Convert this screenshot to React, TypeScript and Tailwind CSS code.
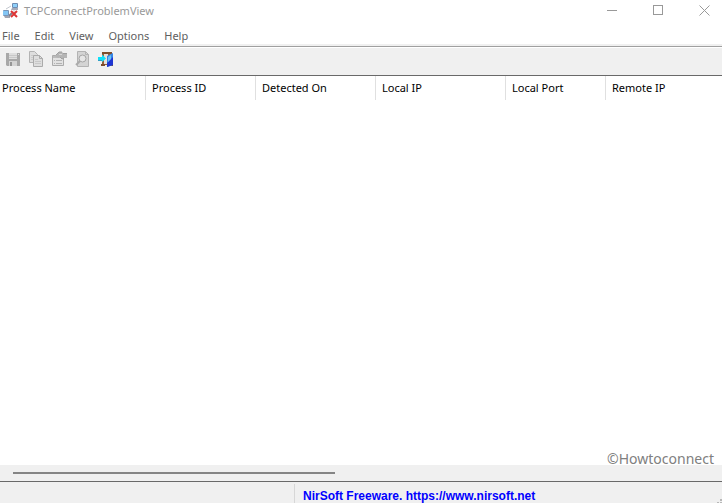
import React from 'react'

type IconProps = {
    children: React.ReactNode;
}

type ToolButton = {
    label: string;
    icon: React.ReactNode;
    disabled: boolean;
}

const menus = ['File', 'Edit', 'View', 'Options', 'Help'];

const columns = [
    { name: 'Process Name', width: 'w-[146px] pl-0.5' },
    { name: 'Process ID', width: 'w-[110px] pl-1.5' },
    { name: 'Detected On', width: 'w-[120px] pl-1.5' },
    { name: 'Local IP', width: 'w-[130px] pl-1.5' },
    { name: 'Local Port', width: 'w-[100px] pl-1.5' },
    { name: 'Remote IP', width: 'w-[130px] pl-1.5' },
];

const Icon: React.FC<IconProps> = ({ children }) => (
    <svg width="16" height="16" viewBox="0 0 16 16" fill="none" aria-hidden="true" className="shrink-0">
        {children}
    </svg>
)

const AppIcon = () => (
    <Icon>
        <path d="M3 6l5-3M11 6v4" stroke="#c3c7ce" />
        <rect x="9" y="0" width="6" height="5" rx="1" fill="#6f8cb2" />
        <rect x="10" y="1" width="4" height="3" fill="#8ed0fa" />
        <path d="M9 5h6v2H8z" fill="#a7abb8" />
        <rect x="0" y="7" width="6" height="6" rx="1" fill="#7794b8" />
        <rect x="0" y="8" width="5" height="4" fill="#83c6f5" />
        <path d="M1 13h6v2H2z" fill="#a2a5b0" />
        <path d="M6 13l3-3" stroke="#7d7d8c" strokeWidth="2" />
        <path d="M8 8l6 6M14 8l-6 6" stroke="#dc3434" strokeWidth="2" />
    </Icon>
)

const SaveIcon = () => (
    <Icon>
        <path d="M1 2h14v13H2l-1-1z" fill="#a8a8a8" />
        <path d="M4 2h8v6H4z" fill="#dedede" />
        <path d="M4 4.500h8M4 6.500h8" stroke="#c8c8c8" />
        <path d="M4 10h8v5H4z" fill="#d4d4d4" />
        <path d="M5 11h2v4H5z" fill="#969696" />
        <path d="M13 3h1v1h-1z" fill="#e4e4e4" />
    </Icon>
)

const CopyIcon = () => (
    <Icon>
        <path d="M1.500.5h5l3 3v8h-8z" fill="#dedede" stroke="#b3b3b3" />
        <path d="M3 4.500h4M3 6.500h4M3 8.500h3" stroke="#cbcbcb" />
        <path d="M5.500 4.500h6l3 3v8h-9z" fill="#dedede" stroke="#ababab" />
        <path d="M11.500 4.500v3h3" stroke="#ababab" />
        <path d="M7 8.500h3M7 10.500h6M7 12.500h6" stroke="#c8c8c8" />
    </Icon>
)

const PropertiesIcon = () => (
    <Icon>
        <path d="M1.500 4.500h11v10h-11z" fill="#e2e2e2" stroke="#ababab" />
        <path d="M2 5h10v2H2z" fill="#bcbcbc" />
        <path d="M3 9.500h1M5 9.500h6M3 12.500h1M5 12.500h6" stroke="#b3b3b3" />
        <path d="M4 5l4-4h3l1 1h4v5h-3l-2 1-2-2-2 1z" fill="#b5b5b5" />
        <path d="M5 4l3-3h3M12 2.500h4M9 6l2 2 2-1" stroke="#a0a0a0" />
        <path d="M8 3h3v1H8z" fill="#d6d6d6" />
    </Icon>
)

const FindIcon = () => (
    <Icon>
        <path d="M3.500.5h8l3 3v12h-11z" fill="#d4d4d4" stroke="#b3b3b3" />
        <path d="M11.500.5v3h3" stroke="#b3b3b3" />
        <path d="M6 10l-4 4" stroke="#ababab" strokeWidth="2" />
        <circle cx="8.500" cy="7.500" r="3.500" fill="#e6e6e6" stroke="#a5a5a5" />
    </Icon>
)

const ExitIcon = () => (
    <Icon>
        <path d="M5 1h10v2H5z" fill="#7d4d2c" />
        <path d="M5 3h10v11H5z" fill="#94603b" />
        <path d="M7 3h4v10H7z" fill="#e6e0da" />
        <path d="M4 13h4v2H4zM13 13h3v2h-3z" fill="#7b4b2c" />
        <path d="M10 5l6-3v12l-6 2z" fill="#3486e6" />
        <path d="M10 12l6-6v8l-6 2z" fill="#1f35d2" />
        <path d="M11 6l3-2v4l-3 3z" fill="#6cc0f5" />
        <path d="M1 6h4V3.500L9 7.500 5 11V9H1z" fill="#10e0f8" />
        <path d="M1 9.500h4" stroke="#2f9fc5" />
    </Icon>
)

const tools: ToolButton[] = [
    { label: 'Save Selected Items', icon: <SaveIcon />, disabled: true },
    { label: 'Copy Selected Items', icon: <CopyIcon />, disabled: true },
    { label: 'Properties', icon: <PropertiesIcon />, disabled: true },
    { label: 'Find', icon: <FindIcon />, disabled: true },
    { label: 'Exit', icon: <ExitIcon />, disabled: false },
];

const TitleBar = () => (
    <header className="flex h-6 shrink-0 items-start justify-between">
        <div className="flex pl-[3px] pt-[3px]">
            <AppIcon />
            <h1 className="pl-[5px] text-[#999999]">TCPConnectProblemView</h1>
        </div>
        <div className="flex gap-2.5 text-[#999999]">
            <button aria-label="Minimize" className="flex h-5 w-9 items-center justify-center">
                <svg width="11" height="11" fill="none" stroke="currentColor"><path d="M0 5.500h10" /></svg>
            </button>
            <button aria-label="Maximize" className="flex h-5 w-9 items-center justify-center">
                <svg width="11" height="11" fill="none" stroke="currentColor"><rect x=".5" y=".5" width="9" height="9" /></svg>
            </button>
            <button aria-label="Close" className="flex h-5 w-9 items-center justify-center">
                <svg width="11" height="11" fill="none" stroke="currentColor"><path d="M.5.5l10 10M10.500.5l-10 10" /></svg>
            </button>
        </div>
    </header>
)

const Toolbar = () => (
    <div role="toolbar" className="flex h-[30px] shrink-0 items-start border-b border-b-[#696969] border-t border-t-[#a0a0a0] bg-[#f0f0f0]">
        <div className="flex flex-1 border-t border-white pl-0.5 pt-[3px]">
            {tools.map((tool) => (
                <button
                    key={tool.label}
                    aria-label={tool.label}
                    disabled={tool.disabled}
                    className="w-[23px] pl-[3px]"
                >
                    {tool.icon}
                </button>
            ))}
        </div>
    </div>
)

const StatusBar = () => (
    <footer className="relative flex h-[22px] shrink-0 flex-col border-t border-[#696969] bg-[#f0f0f0]">
        <div className="mt-px h-px bg-[#d7d7d7]"></div>
        <div className="mt-px flex flex-1">
            <div className="w-[295px] border-r border-[#d7d7d7]"></div>
            <a
                href="https://www.nirsoft.net"
                className="pl-2 pt-1 font-['Liberation_Sans',Arial,sans-serif] text-[12px] font-bold leading-4 text-[#0000ff]"
            >
                NirSoft Freeware. https://www.nirsoft.net
            </a>
        </div>
        <svg width="5" height="4" fill="#b8b8b8" aria-hidden="true" className="absolute bottom-0 right-0">
            <path d="M3 0h2v2H3zM0 3h2v1H0zM3 3h2v1H3z" />
        </svg>
    </footer>
)

export default function App() {
    return (
        <div className="flex h-screen flex-col overflow-hidden bg-white font-['Noto_Sans','Open_Sans',sans-serif] text-[11px] leading-4">
            <TitleBar />
            <nav className="flex h-5 shrink-0 items-start gap-[15px] pl-0.5 pt-1 text-[#606060]">
                {menus.map((menu) => (
                    <button key={menu}>{menu}</button>
                ))}
            </nav>
            <div className="h-0.5 shrink-0 bg-[#f0f0f0]"></div>
            <Toolbar />

            <main className="relative min-h-0 flex-1">
                <div className="overflow-hidden">
                    <table className="w-[736px] table-fixed border-separate border-spacing-0">
                        <thead>
                            <tr>
                                {columns.map((column) => (
                                    <th
                                        key={column.name}
                                        className={`${column.width} h-6 border-r border-[#e0e0e0] text-left font-normal text-black`}
                                    >
                                        {column.name}
                                    </th>
                                ))}
                            </tr>
                        </thead>
                    </table>
                </div>
                <p className="absolute bottom-0 right-2 z-10 text-[14px] leading-3 text-[#808080]">©Howtoconnect</p>
            </main>

            <div className="flex h-4 shrink-0 items-center bg-[#f0f0f0] pl-[13px] pr-3">
                <div className="h-0.5 w-[322px] bg-[#858585]"></div>
            </div>
            <StatusBar />
        </div>
    )
}
